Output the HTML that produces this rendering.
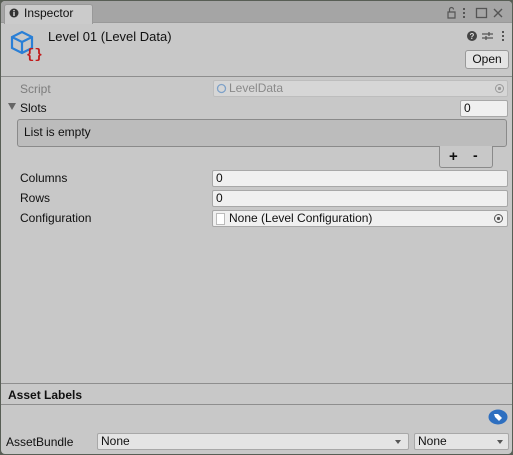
<!DOCTYPE html>
<html><head><meta charset="utf-8"><style>
*{box-sizing:border-box;margin:0;padding:0}
body{width:513px;height:455px;background:#585e55;font-family:"Liberation Sans",sans-serif;font-size:12px;color:#101010;overflow:hidden;position:relative}
.win{position:absolute;left:1px;top:1px;width:511px;height:453px;background:#c8c8c8;border-radius:4px;overflow:hidden}
.tabbar{position:absolute;left:0;top:0;width:511px;height:22px;background:#a5a5a5;border-bottom:1px solid #999}
.tab{position:absolute;left:3px;top:3px;width:89px;height:20px;background:#cbcbcb;border-radius:3px 3px 0 0;border:1px solid #999;border-bottom:none}
.abs{position:absolute}
.field{position:absolute;background:#f0f0f0;border:1px solid #a8a8a8;border-radius:2px;height:17px;padding-left:3px;line-height:15px}
.lbl{position:absolute;left:19px;line-height:16px}
.line{position:absolute;left:0;width:511px;height:1px;background:#8e8e8e}
</style></head><body>
<div class="win">
<div class="tabbar"></div>
<div class="tab"></div>
<svg class="abs" style="left:8px;top:7px" width="10" height="10"><circle cx="5" cy="5" r="4.5" fill="#333"/><rect x="4.3" y="4" width="1.4" height="4" fill="#ddd"/><rect x="4.3" y="2" width="1.4" height="1.3" fill="#ddd"/></svg>
<div class="abs" style="left:23px;top:5px;font-size:12px">Inspector</div>
<svg class="abs" style="left:445px;top:5px" width="62" height="13"><path d="M2 6h7v6H2zM3.5 6V3.5a2 2 0 0 1 4 0" fill="none" stroke="#555" stroke-width="1.2"/><rect x="17" y="2" width="2" height="2" fill="#555"/><rect x="17" y="6" width="2" height="2" fill="#555"/><rect x="17" y="10" width="2" height="2" fill="#555"/><rect x="30.5" y="2.5" width="10" height="9" fill="none" stroke="#555" stroke-width="1.3"/><path d="M48 3l8 8M56 3l-8 8" stroke="#555" stroke-width="1.4"/></svg>
<svg class="abs" style="left:8px;top:29px" width="34" height="32"><path d="M13 2l10 5v11l-10 5-10-5V7z M3 7l10 5 10-5 M13 12v11" fill="none" stroke="#2a7fd6" stroke-width="2.2"/><text x="17" y="28" font-family="Liberation Mono" font-weight="bold" font-size="14" fill="#c21b1b">{}</text></svg>
<div class="abs" style="left:47px;top:28px;font-size:13px">Level 01 (Level Data)</div>
<svg class="abs" style="left:465px;top:28px" width="42" height="14"><circle cx="6" cy="7" r="5" fill="#444"/><text x="3.5" y="10" font-size="8" fill="#ddd" font-weight="bold">?</text><path d="M16 5h11M16 9h11" stroke="#555" stroke-width="1.3"/><path d="M23 3v4M20 7v4" stroke="#555" stroke-width="1.3"/><rect x="36" y="2" width="2" height="2" fill="#555"/><rect x="36" y="6" width="2" height="2" fill="#555"/><rect x="36" y="10" width="2" height="2" fill="#555"/></svg>
<div class="abs" style="left:464px;top:49px;width:44px;height:19px;background:#e4e4e4;border:1px solid #999;border-radius:3px;text-align:center;line-height:17px">Open</div>
<div class="line" style="top:75px"></div>
<div class="lbl" style="top:80px;color:#7d7d7d">Script</div>
<div class="field" style="left:212px;top:79px;width:295px;background:#d6d6d6;border-color:#bdbdbd;color:#8a8a8a;padding-left:15px">LevelData</div>
<svg class="abs" style="left:215px;top:82px" width="11" height="11"><circle cx="5.5" cy="5.5" r="4" fill="none" stroke="#7ea1c8" stroke-width="1.3"/></svg>
<svg class="abs" style="left:493px;top:82px" width="11" height="11"><circle cx="5.5" cy="5.5" r="4" fill="none" stroke="#999" stroke-width="1"/><circle cx="5.5" cy="5.5" r="1.6" fill="#999"/></svg>
<div class="abs" style="left:7px;top:102px;width:0;height:0;border-left:4px solid transparent;border-right:4px solid transparent;border-top:7px solid #666"></div>
<div class="lbl" style="top:99px">Slots</div>
<div class="field" style="left:459px;top:99px;width:48px">0</div>
<div class="abs" style="left:16px;top:118px;width:490px;height:28px;background:#bcbcbc;border:1px solid #8a8a8a;border-radius:3px;padding:5px 0 0 6px">List is empty</div>
<div class="abs" style="left:438px;top:145px;width:54px;height:22px;background:#c8c8c8;border:1px solid #8a8a8a;border-top:none;border-radius:0 0 3px 3px"></div>
<div class="abs" style="left:448px;top:147px;font-weight:bold;font-size:15px">+</div>
<div class="abs" style="left:472px;top:146px;font-weight:bold;font-size:14px">-</div>
<div class="lbl" style="top:169px">Columns</div>
<div class="field" style="left:211px;top:169px;width:296px">0</div>
<div class="lbl" style="top:189px">Rows</div>
<div class="field" style="left:211px;top:189px;width:296px">0</div>
<div class="lbl" style="top:209px">Configuration</div>
<div class="field" style="left:211px;top:209px;width:296px;padding-left:16px">None (Level Configuration)</div>
<div class="abs" style="left:215px;top:212px;width:9px;height:12px;background:#fff;border:1px solid #bbb"></div>
<svg class="abs" style="left:492px;top:212px" width="11" height="11"><circle cx="5.5" cy="5.5" r="4" fill="none" stroke="#555" stroke-width="1"/><circle cx="5.5" cy="5.5" r="1.6" fill="#555"/></svg>
<div class="line" style="top:382px"></div>
<div class="abs" style="left:7px;top:387px;font-weight:bold">Asset Labels</div>
<div class="line" style="top:403px"></div>
<svg class="abs" style="left:487px;top:408px" width="20" height="16"><ellipse cx="10" cy="8" rx="9.5" ry="7.5" fill="#2e6fc0"/><path d="M6 5h4l4 4-3 3-4-4z" fill="#fff"/></svg>
<div class="abs" style="left:5px;top:434px">AssetBundle</div>
<div class="field" style="left:96px;top:432px;width:312px;background:#e4e4e4">None</div>
<div class="abs" style="left:394px;top:439px;border-left:3px solid transparent;border-right:3px solid transparent;border-top:4px solid #555"></div>
<div class="field" style="left:413px;top:432px;width:95px;background:#e4e4e4">None</div>
<div class="abs" style="left:496px;top:439px;border-left:3px solid transparent;border-right:3px solid transparent;border-top:4px solid #555"></div>
</div>
</body></html>
